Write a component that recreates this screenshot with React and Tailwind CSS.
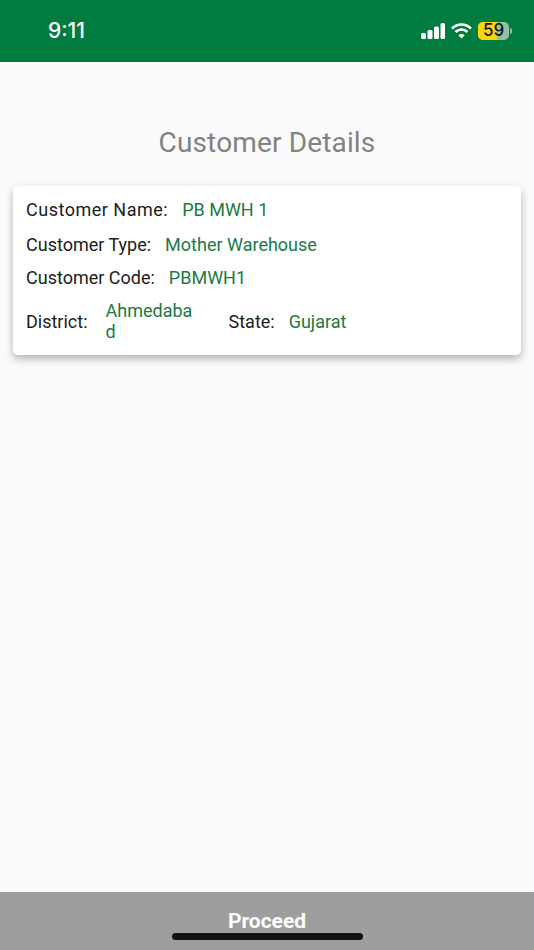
import React from "react";

const Field = ({ label, value, labelClass = "" }) => (
  <div className="flex items-center">
    <span className={`text-[#1c1c1c] ${labelClass}`}>{label}</span>
    <span className="text-[#1a7a42] ml-[14px]">{value}</span>
  </div>
);

const StatusIcons = () => (
  <div className="flex items-center">
    <svg width="24" height="16" viewBox="0 0 24 16" fill="#fff">
      <rect x="0" y="10" width="5" height="6" rx="1.5" />
      <rect x="6.5" y="7" width="5" height="9" rx="1.5" />
      <rect x="13" y="3.5" width="5" height="12.500" rx="1.5" />
      <rect x="19.5" y="0" width="4.500" height="16" rx="1.5" />
    </svg>
    <svg className="ml-[6px]" width="21" height="16" viewBox="0 0 21 16" fill="none" stroke="#fff" strokeWidth="2.6">
      <path d="M1 5.500C6.500 0.200 14.500 0.200 20 5.500" />
      <path d="M4.500 9C8 5.600 13 5.600 16.500 9" />
      <path d="M10.500 15.500L7.400 12.300C9.200 10.700 11.800 10.700 13.600 12.300Z" fill="#fff" stroke="none" />
    </svg>
    <div className="ml-[6px] relative w-[31px] h-[18px] rounded-[5px] overflow-hidden bg-[#8fc3a3] flex items-center justify-center">
      <div className="absolute left-0 top-0 bottom-0 w-[19px] bg-[#fbd60f]" />
      <span className="relative text-[17px] leading-none font-medium text-[#111] font-['Inter',sans-serif]">59</span>
    </div>
    <div className="ml-px w-[2px] h-[6px] rounded-r-sm bg-[#8fc3a3]" />
  </div>
);

export default function App() {
  return (
    <div className="h-[950px] w-full flex flex-col bg-[#fafafa] font-['Roboto',sans-serif] overflow-hidden">
      <div className="h-[62px] bg-[#007c3f] flex items-center justify-between pl-[48px] pr-[22px] pb-[1px]">
        <span className="text-white text-[21px] font-medium font-['Inter',sans-serif] leading-none">9:11</span>
        <StatusIcons />
      </div>

      <div className="flex-1 px-[13px]">
        <h1 className="mt-[64px] text-center text-[28px] leading-[33px] tracking-[0.15px] text-[#828282]">Customer Details</h1>
        <div className="mt-[27px] h-[169px] bg-white rounded-[5px] shadow-[0_4px_8px_rgba(0,0,0,0.28)] pl-[13px] pt-[12px] text-[18px] leading-[24px]">
          <Field label="Customer Name:" value="PB MWH 1" labelClass="tracking-[0.5px]" />
          <div className="mt-[11px]">
            <Field label="Customer Type:" value="Mother Warehouse" />
          </div>
          <div className="mt-[9px]">
            <Field label="Customer Code:" value="PBMWH1" />
          </div>
          <div className="mt-[10px] flex items-center">
            <span className="text-[#1c1c1c]">District:</span>
            <span className="ml-[18px] w-[90px] pb-[2px] text-[#1a7a42] leading-[21px] break-all">Ahmedabad</span>
            <span className="ml-[33px] text-[#1c1c1c]">State:</span>
            <span className="ml-[14px] text-[#1a7a42]">Gujarat</span>
          </div>
        </div>
      </div>

      <div className="relative h-[58px] bg-[#9e9e9e] flex justify-center">
        <span className="mt-[16px] text-white text-[21px] leading-[26px] font-bold">Proceed</span>
        <div className="absolute left-[172px] top-[41px] w-[191px] h-[7px] rounded-full bg-[#111]" />
      </div>
    </div>
  );
}
